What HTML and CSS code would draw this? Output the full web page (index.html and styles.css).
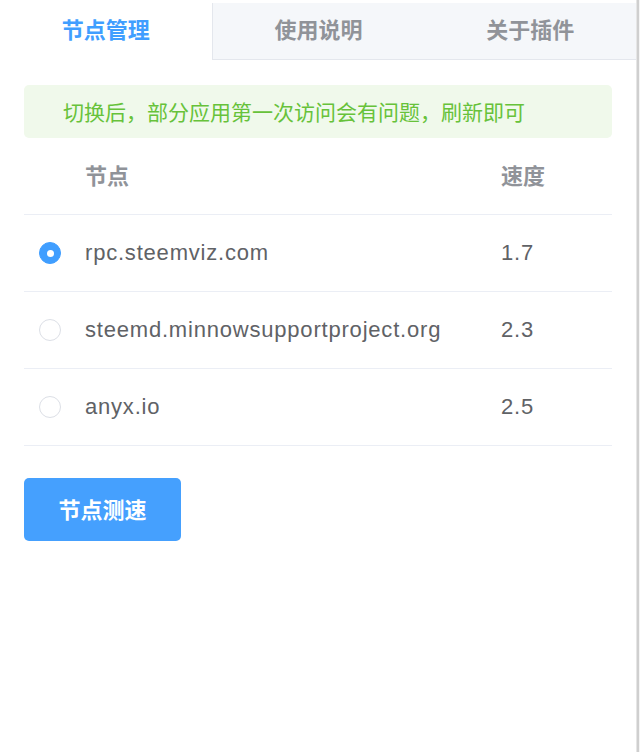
FILE: index.html
```html
<!DOCTYPE html>
<html lang="zh-CN">
<head>
<meta charset="utf-8">
<title>节点管理</title>
<link rel="stylesheet" href="styles.css">
</head>
<body>
<div class="page">
  <div class="panel">
    <div class="tabs">
      <div class="tab active">节点管理</div>
      <div class="tab first-inactive">使用说明</div>
      <div class="tab">关于插件</div>
    </div>
    <div class="content">
      <div class="alert">切换后，部分应用第一次访问会有问题，刷新即可</div>
      <div class="table">
        <div class="row head">
          <div class="cell radio-cell"></div>
          <div class="cell name">节点</div>
          <div class="cell speed">速度</div>
        </div>
        <div class="row">
          <div class="cell radio-cell"><span class="radio checked"></span></div>
          <div class="cell name">rpc.steemviz.com</div>
          <div class="cell speed">1.7</div>
        </div>
        <div class="row">
          <div class="cell radio-cell"><span class="radio"></span></div>
          <div class="cell name">steemd.minnowsupportproject.org</div>
          <div class="cell speed">2.3</div>
        </div>
        <div class="row">
          <div class="cell radio-cell"><span class="radio"></span></div>
          <div class="cell name">anyx.io</div>
          <div class="cell speed">2.5</div>
        </div>
      </div>
      <button class="btn">节点测速</button>
    </div>
  </div>
  <div class="edge"></div>
</div>
</body>
</html>
```
FILE: styles.css
```css
* { box-sizing: border-box; }
html, body { margin: 0; padding: 0; background: #fff; }
body {
  font-family: "Liberation Sans", "Noto Sans CJK SC", sans-serif;
  font-size: 22px;
  color: #606266;
}
.page {
  display: flex;
  width: 640px;
  height: 752px;
}
.panel {
  width: 636px;
  flex: none;
}
.edge {
  width: 4px;
  flex: none;
  border-left: 1px solid #e6e6e6;
  border-right: 1px solid #f4f4f4;
  background: #cfcfcf;
}
.tabs {
  display: flex;
  margin-top: 3px;
  height: 57px;
}
.tab {
  flex: 1;
  display: flex;
  align-items: center;
  justify-content: center;
  font-family: "Noto Sans CJK SC", sans-serif;
  font-weight: 700;
  font-size: 22px;
  color: #909399;
  background: #f5f7fa;
  border-bottom: 1px solid #e4e7ed;
  padding-bottom: 6px;
}
.tab.active {
  color: #409eff;
  background: #fff;
  border-bottom-color: #fff;
}
.tab.first-inactive {
  border-left: 1px solid #e4e7ed;
}
.content {
  padding: 25px 24px 0;
}
.alert {
  height: 53px;
  display: flex;
  align-items: center;
  padding: 0 39px;
  background: #f0f9eb;
  color: #67c23a;
  border-radius: 5px;
  font-family: "Noto Sans CJK SC", sans-serif;
  font-size: 21px;
  padding-bottom: 2px;
}
.table {
  display: flex;
  flex-direction: column;
}
.row {
  display: grid;
  grid-template-columns: 61px 416px 1fr;
  align-items: center;
  height: 77px;
  border-bottom: 1px solid #ebeef5;
  letter-spacing: 0.8px;
}
.row.head {
  color: #909399;
  font-family: "Noto Sans CJK SC", sans-serif;
  font-weight: 700;
  letter-spacing: 0;
  padding-bottom: 5px;
}
.radio-cell {
  display: flex;
  align-items: center;
  padding-left: 15px;
}
.radio {
  display: block;
  width: 22px;
  height: 22px;
  border-radius: 50%;
  border: 1.5px solid #dcdfe6;
  background: #fff;
  position: relative;
}
.radio.checked {
  background: #409eff;
  border-color: #409eff;
}
.radio.checked::after {
  content: "";
  position: absolute;
  left: 50%;
  top: 50%;
  width: 7px;
  height: 7px;
  margin: -3.5px 0 0 -3.5px;
  border-radius: 50%;
  background: #fff;
}
.btn {
  display: flex;
  align-items: center;
  justify-content: center;
  margin-top: 32px;
  width: 157px;
  height: 63px;
  border: none;
  border-radius: 5px;
  background: #45a0fe;
  color: #fff;
  font-family: "Noto Sans CJK SC", sans-serif;
  font-weight: 700;
  font-size: 22px;
  padding: 0 0 3px;
}
```
